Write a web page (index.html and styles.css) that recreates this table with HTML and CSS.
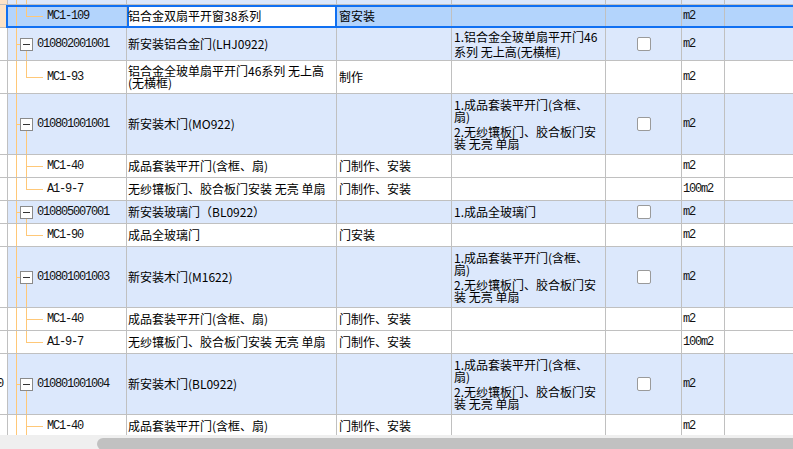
FILE: index.html
```html
<!DOCTYPE html>
<html lang="zh-CN">
<head>
<meta charset="utf-8">
<title>清单</title>
<link rel="stylesheet" href="styles.css">
</head>
<body>
<div class="grid">
  <div class="rows">
    <div class="row h1 parent-row top-partial">
      <div class="c hdr peach"></div>
      <div class="c tree parent"><span class="minus"></span><span class="code"></span></div>
      <div class="c name"></div>
      <div class="c content"></div>
      <div class="c feat"></div>
      <div class="c chk"><span class="box"></span></div>
      <div class="c unit"></div>
      <div class="c rest"></div>
    </div>

    <div class="row h1 selected">
      <div class="c hdr peach"></div>
      <div class="c tree child last"><span class="code">MC1-109</span></div>
      <div class="c name editing">铝合金双扇平开窗38系列</div>
      <div class="c content">窗安装</div>
      <div class="c feat"></div>
      <div class="c chk"></div>
      <div class="c unit">m2</div>
      <div class="c rest"></div>
    </div>

    <div class="row h2 parent-row">
      <div class="c hdr"></div>
      <div class="c tree parent"><span class="minus"></span><span class="code">010802001001</span></div>
      <div class="c name">新安装铝合金门(LHJ0922)</div>
      <div class="c content"></div>
      <div class="c feat"><div class="p">1.铝合金全玻单扇平开门46</div><div class="p">系列 无上高(无横框)</div></div>
      <div class="c chk"><span class="box"></span></div>
      <div class="c unit">m2</div>
      <div class="c rest"></div>
    </div>

    <div class="row h2">
      <div class="c hdr"></div>
      <div class="c tree child last"><span class="code">MC1-93</span></div>
      <div class="c name multi">铝合金全玻单扇平开门46系列 无上高<br>(无横框)</div>
      <div class="c content">制作</div>
      <div class="c feat"></div>
      <div class="c chk"></div>
      <div class="c unit">m2</div>
      <div class="c rest"></div>
    </div>

    <div class="row h4 parent-row">
      <div class="c hdr"></div>
      <div class="c tree parent"><span class="minus"></span><span class="code">010801001001</span></div>
      <div class="c name">新安装木门(MO922)</div>
      <div class="c content"></div>
      <div class="c feat"><div class="p">1.成品套装平开门(含框、<br>扇)</div><div class="p">2.无纱镶板门、胶合板门安<br>装 无亮 单扇</div></div>
      <div class="c chk"><span class="box"></span></div>
      <div class="c unit">m2</div>
      <div class="c rest"></div>
    </div>

    <div class="row h1">
      <div class="c hdr"></div>
      <div class="c tree child"><span class="code">MC1-40</span></div>
      <div class="c name">成品套装平开门(含框、扇)</div>
      <div class="c content">门制作、安装</div>
      <div class="c feat"></div>
      <div class="c chk"></div>
      <div class="c unit">m2</div>
      <div class="c rest"></div>
    </div>

    <div class="row h1">
      <div class="c hdr"></div>
      <div class="c tree child last"><span class="code">A1-9-7</span></div>
      <div class="c name">无纱镶板门、胶合板门安装 无亮 单扇</div>
      <div class="c content">门制作、安装</div>
      <div class="c feat"></div>
      <div class="c chk"></div>
      <div class="c unit">100m2</div>
      <div class="c rest"></div>
    </div>

    <div class="row h1 parent-row">
      <div class="c hdr"></div>
      <div class="c tree parent"><span class="minus"></span><span class="code">010805007001</span></div>
      <div class="c name">新安装玻璃门（BL0922）</div>
      <div class="c content"></div>
      <div class="c feat"><div class="p">1.成品全玻璃门</div></div>
      <div class="c chk"><span class="box"></span></div>
      <div class="c unit">m2</div>
      <div class="c rest"></div>
    </div>

    <div class="row h1">
      <div class="c hdr"></div>
      <div class="c tree child last"><span class="code">MC1-90</span></div>
      <div class="c name">成品全玻璃门</div>
      <div class="c content">门安装</div>
      <div class="c feat"></div>
      <div class="c chk"></div>
      <div class="c unit">m2</div>
      <div class="c rest"></div>
    </div>

    <div class="row h4 parent-row">
      <div class="c hdr"></div>
      <div class="c tree parent"><span class="minus"></span><span class="code">010801001003</span></div>
      <div class="c name">新安装木门(M1622)</div>
      <div class="c content"></div>
      <div class="c feat"><div class="p">1.成品套装平开门(含框、<br>扇)</div><div class="p">2.无纱镶板门、胶合板门安<br>装 无亮 单扇</div></div>
      <div class="c chk"><span class="box"></span></div>
      <div class="c unit">m2</div>
      <div class="c rest"></div>
    </div>

    <div class="row h1">
      <div class="c hdr"></div>
      <div class="c tree child"><span class="code">MC1-40</span></div>
      <div class="c name">成品套装平开门(含框、扇)</div>
      <div class="c content">门制作、安装</div>
      <div class="c feat"></div>
      <div class="c chk"></div>
      <div class="c unit">m2</div>
      <div class="c rest"></div>
    </div>

    <div class="row h1">
      <div class="c hdr"></div>
      <div class="c tree child last"><span class="code">A1-9-7</span></div>
      <div class="c name">无纱镶板门、胶合板门安装 无亮 单扇</div>
      <div class="c content">门制作、安装</div>
      <div class="c feat"></div>
      <div class="c chk"></div>
      <div class="c unit">100m2</div>
      <div class="c rest"></div>
    </div>

    <div class="row h4 parent-row">
      <div class="c hdr num">10</div>
      <div class="c tree parent"><span class="minus"></span><span class="code">010801001004</span></div>
      <div class="c name">新安装木门(BL0922)</div>
      <div class="c content"></div>
      <div class="c feat"><div class="p">1.成品套装平开门(含框、<br>扇)</div><div class="p">2.无纱镶板门、胶合板门安<br>装 无亮 单扇</div></div>
      <div class="c chk"><span class="box"></span></div>
      <div class="c unit">m2</div>
      <div class="c rest"></div>
    </div>

    <div class="row h1">
      <div class="c hdr"></div>
      <div class="c tree child"><span class="code">MC1-40</span></div>
      <div class="c name">成品套装平开门(含框、扇)</div>
      <div class="c content">门制作、安装</div>
      <div class="c feat"></div>
      <div class="c chk"></div>
      <div class="c unit">m2</div>
      <div class="c rest"></div>
    </div>
  </div>
</div>
<div class="hscroll"><div class="thumb"></div></div>
</body>
</html>
```

FILE: styles.css
```css
html, body {
  margin: 0;
  padding: 0;
  background: #ffffff;
}

body {
  width: 793px;
  height: 449px;
  overflow: hidden;
  font-family: "Noto Sans CJK SC", "Noto Sans", sans-serif;
  font-size: 12px;
  color: #000000;
}

.grid {
  height: 435px;
  overflow: hidden;
}

.rows {
  margin-top: -18px;
}

.row {
  position: relative;
  display: grid;
  grid-template-columns: 8px 119px 210px 115px 154px 76px 43px 1fr;
  background: #ffffff;
}

.row.h1 { height: 23px; }
.row.h2 { height: 33px; }
.row.h4 { height: 61px; }

.parent-row { background: #dce8fc; }

.c {
  box-sizing: border-box;
  border-right: 1px solid #c0c0c0;
  border-bottom: 1px solid #c0c0c0;
  display: flex;
  align-items: center;
  overflow: hidden;
  white-space: nowrap;
  line-height: 12px;
}

.hdr {
  background: #ffffff;
  justify-content: flex-end;
  padding-right: 4px;
}

.hdr.peach { background: #fde3c6; }

.num,
.code,
.unit {
  font-family: "Liberation Mono", monospace;
  font-size: 12px;
  letter-spacing: -1.2px;
  color: #111111;
}

.tree {
  background-repeat: no-repeat;
}

.tree.child {
  padding-left: 39px;
  background-image:
    linear-gradient(#ffc878, #ffc878),
    linear-gradient(#ffc878, #ffc878),
    linear-gradient(#ffc878, #ffc878);
  background-position: 8px 0, 18px 0, 18px 50%;
  background-size: 1px 100%, 1px 100%, 17px 1px;
}

.tree.child.last {
  background-size: 1px 100%, 1px 50%, 17px 1px;
}

.tree.parent {
  padding-left: 12px;
  background-image:
    linear-gradient(#ffc878, #ffc878),
    linear-gradient(#ffc878, #ffc878),
    linear-gradient(#ffc878, #ffc878);
  background-position: 8px 0, 8px 50%, 18px 100%;
  background-size: 1px 100%, 4px 1px, 1px calc(50% - 5px);
}

.minus {
  box-sizing: border-box;
  width: 13px;
  height: 13px;
  margin-right: 4px;
  border: 1px solid #8a8a8a;
  background: #ffffff;
  display: flex;
  align-items: center;
  justify-content: center;
  flex: none;
}

.minus::before {
  content: "";
  width: 7px;
  height: 1px;
  background: #333333;
}

.name { padding-left: 1px; }
.name.multi { white-space: normal; }

.content { padding-left: 2px; }

.feat {
  padding-left: 2px;
  flex-direction: column;
  align-items: flex-start;
  justify-content: center;
}

.feat .p + .p { margin-top: 3px; }

.chk { justify-content: center; }

.box {
  box-sizing: border-box;
  width: 14px;
  height: 14px;
  border: 1px solid #9a9a9a;
  border-radius: 2px;
  background: #ffffff;
}

.unit { padding-left: 1px; }

.rest { border-right: none; }

/* selected row */
.selected { background: #b3d4fc; }

.selected::after {
  content: "";
  position: absolute;
  left: 6px;
  right: 0;
  top: 0;
  bottom: 0;
  border: 2px solid #1070f2;
  border-right: none;
  pointer-events: none;
}

.selected .editing {
  background: #ffffff;
  box-shadow: inset 2px 0 0 #1070f2, inset -1px 0 0 #1070f2;
  border-right-color: #1070f2;
}

/* horizontal scrollbar */
.hscroll {
  box-sizing: border-box;
  height: 14px;
  padding-top: 3px;
  padding-left: 97px;
  background: #efefef;
}

.thumb {
  height: 12px;
  background: #c1c1c1;
  border-radius: 6px 0 0 6px;
}
```
